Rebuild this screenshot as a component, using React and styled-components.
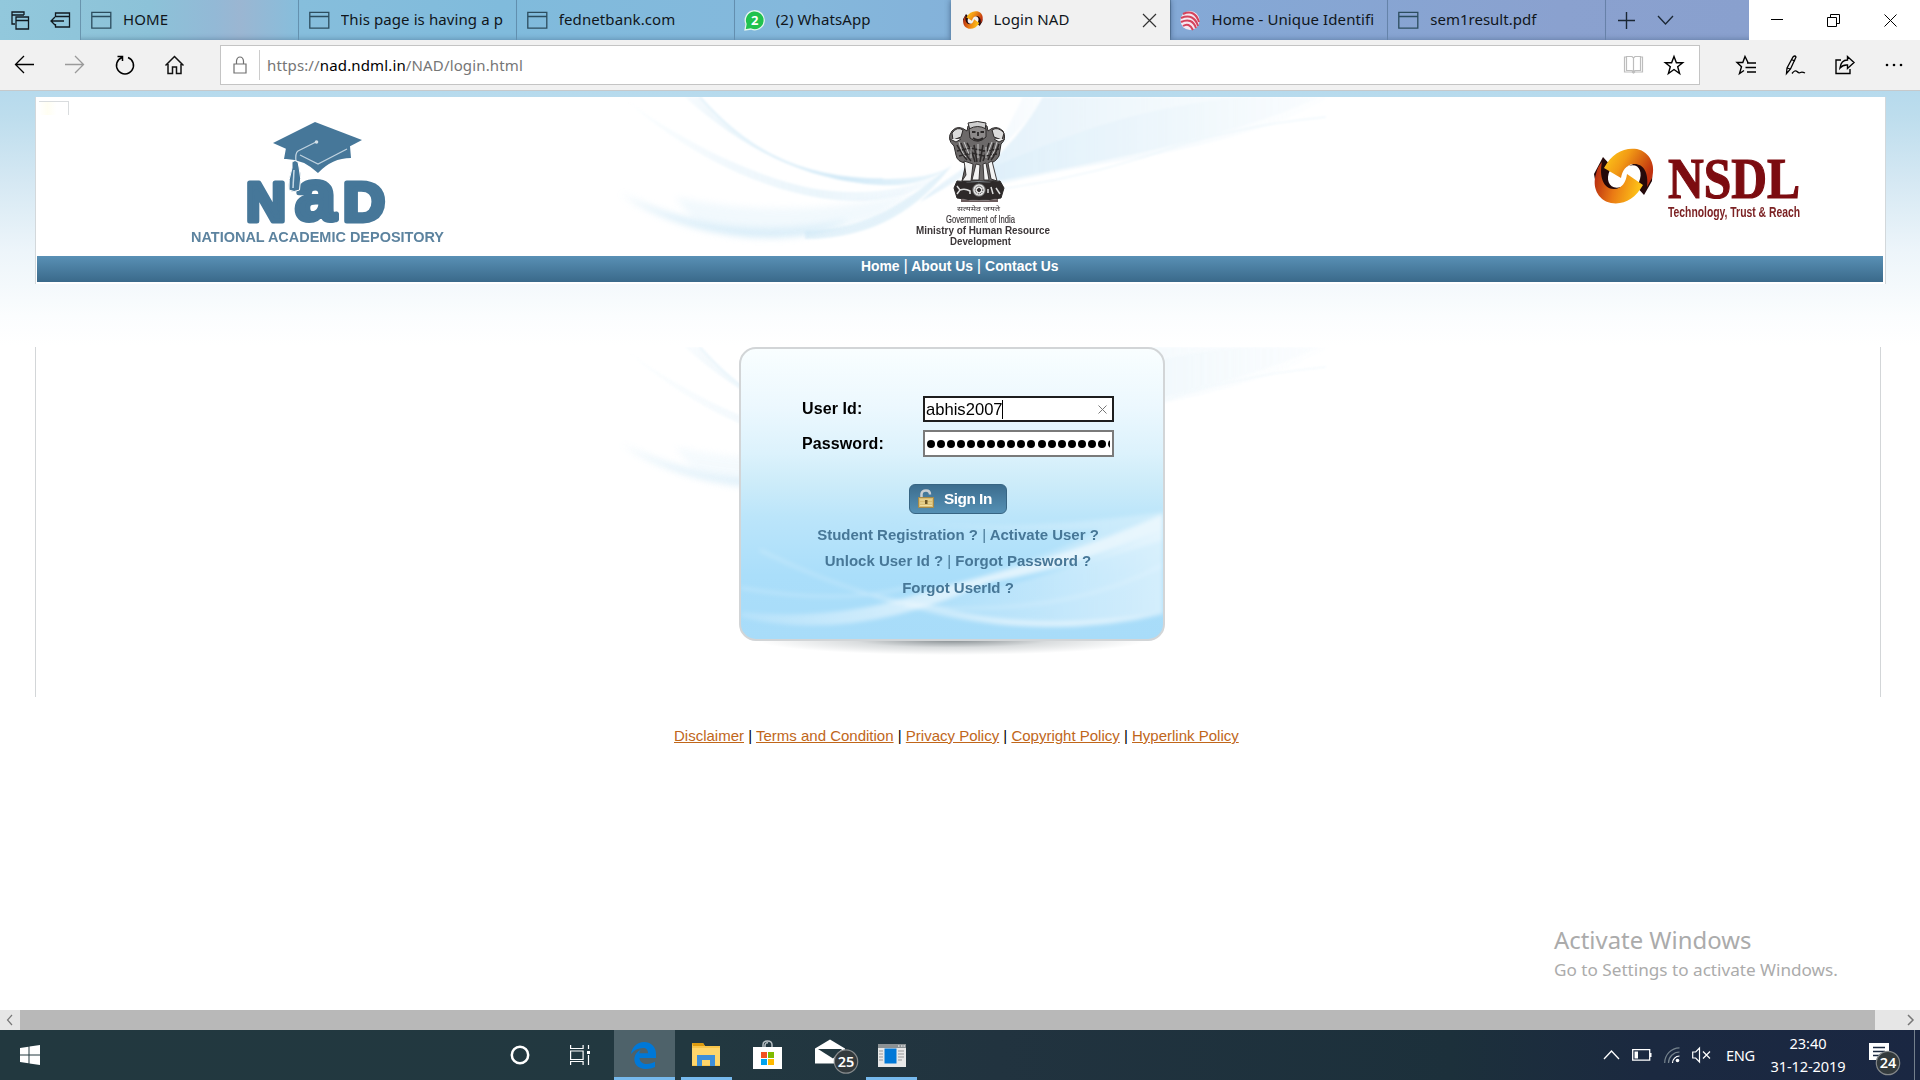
import React from 'react';
import styled, { createGlobalStyle } from 'styled-components';

const ui = '"Noto Sans", "Open Sans", sans-serif';
const arial = '"Liberation Sans", Arial, sans-serif';

const Global = createGlobalStyle`
  * { box-sizing: border-box; }
  body { margin: 0; background: #fff; overflow: hidden; }
  svg { display: block; flex: none; overflow: visible; }
`;

const Screen = styled.div`
  position: relative;
  width: 1920px;
  height: 1080px;
  display: flex;
  flex-direction: column;
  overflow: hidden;
  font-family: ${arial};
  background: #fff;
`;

/* ---------- browser chrome ---------- */
const TabStrip = styled.div`
  display: flex;
  height: 40px;
  flex: none;
  background: linear-gradient(90deg, #92c8dc 0, #8cc2d8 150px, #93b9d6 215px, #9bb6d2 240px, #86bedc 300px, #80bbdc 500px, #84b8dc 800px, #84a9d6 1180px, #8aa1cf 1560px, #89a0ce 1749px);
`;
const Group = styled.div`
  display: flex;
  align-items: center;
  width: ${p => p.$w}px;
  padding-left: ${p => p.$pl || 0}px;
  gap: ${p => p.$gap || 0}px;
`;
const Tab = styled.div`
  display: flex;
  align-items: center;
  width: ${p => p.$w}px;
  padding-left: ${p => p.$pl ?? 10}px;
  gap: ${p => p.$gap || 12}px;
  border-left: 1px solid ${p => (p.$active ? '#f1f1f1' : 'rgba(60,90,120,.45)')};
  box-shadow: inset 0 -6px 5px -5px rgba(40, 70, 100, .35);
  ${p => p.$active && 'background:#f1f1f1; box-shadow: 0 0 6px rgba(30,50,80,.6); clip-path: inset(0 -7px 0 -7px);'}
`;
const TabTitle = styled.span`
  font: 15px/36px ${ui};
  letter-spacing: ${p => p.$ls ?? 0.1}px;
  color: #10161b;
  white-space: nowrap;
  overflow: hidden;
  flex: 1;
  padding-bottom: 2px;
  margin-left: -1px;
`;
const TabClose = styled.svg`
  margin-right: 13px;
`;
const TabEnd = styled.i`
  width: 0;
`;
const WindowButtons = styled.div`
  display: flex;
  align-items: center;
  width: 171px;
  background: #fff;
  padding-left: 22px;
  gap: 44px;
`;
const Toolbar = styled.div`
  display: flex;
  align-items: center;
  height: 51px;
  flex: none;
  background: #f1f1f1;
  border-bottom: 1px solid #c6c9cb;
  padding-left: 14px;
`;
const NavButtons = styled.div`
  display: flex;
  gap: 30px;
  width: 206px;
`;
const AddressBar = styled.div`
  display: flex;
  align-items: center;
  width: 1480px;
  height: 40px;
  border: 1px solid #c4c4c4;
  background: #fff;
  padding-left: 12px;
`;
const Divider = styled.i`
  width: 1px;
  height: 30px;
  margin: 0 7px 0 12px;
  background: #ccc;
`;
const Url = styled.span`
  flex: 1;
  font: 15px/38px ${ui};
  letter-spacing: .14px;
  color: #767676;
  b { font-weight: 400; color: #000; }
`;
const ToolIcons = styled.div`
  display: flex;
  gap: ${p => p.$gap}px;
  padding-left: ${p => p.$pl || 0}px;
  padding-right: ${p => p.$pr || 0}px;
`;

/* ---------- page ---------- */
const Page = styled.main`
  display: flex;
  flex-direction: column;
  height: 919px;
  flex: none;
  padding: 6px 34px 0 35px;
  background: linear-gradient(#b6daed 0, #bddded 25px, #d5e8f3 90px, #edf5fa 160px, #f4f9fc 195px, #fbfdfe 225px, #fff 255px);
`;
const Header = styled.header`
  position: relative;
  height: 187px;
  flex: none;
  background: #fff;
  border: solid #d3d8db;
  border-width: 0 1px;
  padding: 0 2px 2px 1px;
  display: flex;
  flex-direction: column;
`;
const SwirlLayer = styled.svg`
  position: absolute;
  left: 579px;
  top: 0;
  overflow: hidden;
  opacity: ${p => p.$o || 1};
`;
const Logos = styled.div`
  position: relative;
  display: flex;
  height: 159px;
  flex: none;
`;
const Broken = styled.i`
  width: 30px;
  height: 14px;
  margin: 4px 0 0 2px;
  border: solid #d9dcde;
  border-width: 1px 1px 0 0;
  background: linear-gradient(90deg, #fff, #fffef2 30%, #fff 60%);
`;
const NavBar = styled.nav`
  position: relative;
  height: 26px;
  flex: none;
  padding-left: 824px;
  font: bold 13.9px/20px ${arial};
  color: #fff;
  white-space: pre;
  background: linear-gradient(#5990b5, #3a698a);
  i { font-style: normal; font-weight: 400; font-size: 17px; line-height: 16px; }
`;
const Content = styled.section`
  position: relative;
  height: 350px;
  flex: none;
  margin: 63px 5px 0 0;
  border: solid #d3d6d8;
  border-width: 0 1px;
  padding-left: 703px;
`;
const Card = styled.form`
  position: relative;
  width: 426px;
  height: 294px;
  border: 2px solid #d2d5d7;
  border-radius: 17px;
  overflow: hidden;
  background: linear-gradient(#f9feff 0, #ecf8fe 20%, #dcf2fc 36%, #cdecf9 46%, #bbe5fa 58%, #aadefa 78%, #a8dcf9 100%);
`;
const CardArt = styled.svg`
  position: absolute;
  inset: 0;
`;
const CardShadow = styled.div`
  width: 390px;
  height: 15px;
  margin: -1px 0 0 18px;
  background: radial-gradient(ellipse 50% 100% at 50% 0, rgba(90, 100, 105, .75), rgba(130, 140, 145, .3) 50%, transparent);
`;
const Fields = styled.div`
  position: relative;
  padding: 47px 0 0 61px;
  display: grid;
  grid-template-columns: 121px 191px;
  grid-template-rows: 26px 27px;
  row-gap: 8px;
  align-items: center;
`;
const Label = styled.label`
  font: bold 16px/20px ${arial};
  letter-spacing: .1px;
  color: #000;
`;
const Field = styled.div`
  height: 100%;
  display: flex;
  align-items: center;
  border: 2px solid ${p => (p.$focus ? '#1e1e1e' : '#7a7a7a')};
  background: #fff;
  font: 16.6px/20px ${arial};
  padding: ${p => (p.$focus ? '1px 5px 0 1px' : '0 2px 0 1px')};
`;
const Caret = styled.i`
  width: 1px;
  height: 19px;
  background: #000;
  margin: 0 auto 1px -1px;
`;
const Dots = styled.div`
  display: flex;
  gap: 2.1px;
  padding-left: .5px;
  width: 184px;
  overflow: hidden;
`;
const Dot = styled.i`
  flex: none;
  width: 8px;
  height: 8px;
  border-radius: 50%;
  background: #000;
`;
const SignIn = styled.div`
  position: relative;
  display: flex;
  align-items: center;
  width: 98px;
  height: 30px;
  margin: 27px 0 0 168px;
  padding-left: 8px;
  gap: 10px;
  border-radius: 6px;
  border: 1px solid #376583;
  background: linear-gradient(#3c6d8e, #5590b4);
  color: #fff;
  font: bold 15.4px/30px ${arial};
  letter-spacing: -.5px;
  white-space: nowrap;
`;
const Links = styled.div`
  position: relative;
  padding: 8px 0 0 12px;
  text-align: center;
  font: bold 15px/26.3px ${arial};
  color: #477797;
  white-space: pre;
  i { font-style: normal; font-weight: 400; }
`;
const Footer = styled.footer`
  padding: 30px 0 0 639px;
  font: 15px/18px ${arial};
  white-space: pre;
  a { color: #c0661a; text-decoration: underline; }
`;
const Watermark = styled.div`
  position: absolute;
  left: 1554px;
  top: 922px;
  color: #ababab;
  font: 17.15px/25px ${ui};
  white-space: nowrap;
  div { font-size: 23.9px; line-height: 35px; }
`;
const ScrollBar = styled.div`
  display: flex;
  align-items: center;
  height: 20px;
  flex: none;
  background: #e6e6e6;
  padding: 0 5px 0 6px;
`;
const Thumb = styled.div`
  width: 1855px;
  height: 20px;
  margin: 0 auto 0 6px;
  background: #b8b8b8;
`;

/* ---------- taskbar ---------- */
const Taskbar = styled.div`
  display: flex;
  height: 50px;
  flex: none;
  background: linear-gradient(90deg, #22383f 0, #223840 700px, #21333f 1000px, #1c303b 1450px, #1b2940 1650px, #1a2742 1920px);
`;
const Task = styled.div`
  display: flex;
  align-items: center;
  justify-content: center;
  width: ${p => p.$w}px;
  margin-left: ${p => p.$ml || 0}px;
  padding-right: ${p => p.$pr || 0}px;
  background: ${p => (p.$active ? '#4e626a' : 'transparent')};
  border-bottom: 3px solid ${p => (p.$open ? '#76b9ed' : 'transparent')};
  border-top: 3px solid transparent;
`;
const Tray = styled.div`
  display: flex;
  align-items: center;
  margin-left: auto;
  padding-right: 5px;
  color: #fff;
  font: 14.6px/23px ${ui};
`;
const TrayIcon = styled.svg`
  margin-left: ${p => p.$ml || 0}px;
`;
const Lang = styled.span`
  width: 30px;
  margin-left: 14px;
  letter-spacing: -.4px;
`;
const Clock = styled.div`
  width: 80px;
  margin-left: 12px;
  text-align: center;
  letter-spacing: -.1px;
  white-space: nowrap;
`;
const ShowDesktop = styled.i`
  width: 1px;
  height: 50px;
  margin-left: 12px;
  background: #74808c;
`;

const PageIcon = () => (
  <svg width="21" height="17" fill="none" stroke="#2c4d5e" strokeWidth="1.3">
    <path d="M.8.3h19v15.900H.8zM.8 4.500h19" />
  </svg>
);
const NsdlMark = ({ s = 60, h = 56 }) => (
  <svg width={s} height={h} viewBox="0 0 60 56" preserveAspectRatio="none">
    <defs>
      <linearGradient id="oa" x1="0" y1="0" x2="1" y2=".5"><stop offset="0" stopColor="#ffd21a" /><stop offset=".45" stopColor="#f29a15" /><stop offset="1" stopColor="#c0310f" /></linearGradient>
      <linearGradient id="ob" x1="1" y1=".5" x2="0" y2=".3"><stop offset="0" stopColor="#ffc817" /><stop offset=".55" stopColor="#ea7a14" /><stop offset="1" stopColor="#b62b10" /></linearGradient>
    </defs>
    <path d="M9 9 0 26Q2 43 15 46L31 37C18 45 10 34 16 22L20 21Z" fill="#25090a" />
    <path d="M50 47 58 33Q60 17 46 13L30 20C43 12 50 22 45 34L41 37Z" fill="#25090a" />
    <path d="M10 20C18 5 30-1 43 1 56 4 62 17 58 30L53 39C55 24 49 15 39 16 32 17 28 23 27 30Z" fill="url(#oa)" />
    <path d="M49 37C41 51 30 57 17 55 3 52-2 38 2 26 3 21 5 17 8 14 5 28 9 41 20 41 28 41 32 34 33 26Z" fill="url(#ob)" />
  </svg>
);

const Swirl = ({ id }) => (
  <>
    <defs>
      <linearGradient id={id + 'a'} x1="0" x2="1"><stop offset="0" stopColor="#c8e5f5" stopOpacity=".15" /><stop offset=".35" stopColor="#bfe1f4" stopOpacity=".5" /><stop offset=".6" stopColor="#b5dcf2" stopOpacity=".6" /><stop offset="1" stopColor="#c5e4f6" stopOpacity=".35" /></linearGradient>
      <linearGradient id={id + 'b'} x1="0" x2="1"><stop offset="0" stopColor="#d6ebf8" stopOpacity=".75" /><stop offset="1" stopColor="#e8f4fb" stopOpacity=".15" /></linearGradient>
      <filter id={id + 'f'}><feGaussianBlur stdDeviation="1.1" /></filter>
      <filter id={id + 'g'} x="-20%" y="-40%" width="140%" height="180%"><feGaussianBlur stdDeviation="3.5" /></filter>
    </defs>
    <g filter={`url(#${id}f)`}>
      <path d="M85 0C125 45 175 82 268 82 300 82 322 78 337 69 320 82 295 90 265 88 190 84 125 50 70 0Z" fill={`url(#${id}a)`} />
      <path d="M85 0C125 45 175 82 268 82" stroke="#cfe8f6" strokeWidth="1.500" fill="none" opacity=".6" />
      <path d="M13 5C70 45 135 78 195 91 240 99 285 96 330 76 295 104 250 108 205 101 130 88 65 50 13 5Z" fill={`url(#${id}a)`} opacity=".45" />
      <path d="M430 0C405 35 380 58 350 78 335 88 320 97 305 105 330 80 360 68 390 36L408 0Z" fill={`url(#${id}b)`} />
      <path d="M428 0H705Q640 30 530 55 430 76 340 92 395 58 428 0Z" fill={`url(#${id}b)`} />
      <path d="M340 88Q400 58 480 30 560 5 630 0H715Q660 35 530 60 430 75 345 97Z" fill={`url(#${id}b)`} opacity=".6" />
      <path d="M350 96Q440 88 530 60 610 30 711 20" stroke="#e4f2fa" fill="none" opacity=".8" />
      <path d="M190 134C255 132 290 105 337 68 305 110 260 142 190 142Z" fill="#c3e3f5" opacity=".45" />
    </g>
    <path d="M5 96C65 128 150 140 235 122 190 152 80 148 5 96Z" fill="#bfe1f4" opacity=".6" filter={`url(#${id}g)`} />
    <path d="M60 100Q180 125 300 95L260 122Q180 145 80 125Z" fill="#e2f2fb" filter={`url(#${id}g)`} opacity=".45" />
  </>
);

const NadLogo = () => (
  <svg width="270" height="130" viewBox="186 118 270 130" fill="#467799" fontFamily="Liberation Sans, sans-serif">
    <path d="M286 148 284 159Q302 158 318 173 332 158 351 158L350 146Z" />
    <path d="M273 143 315 122 362 140 318 163Z" />
    <path d="M300 155 318 164 347 149M316 142 298 151Q295 153 296 162" fill="none" stroke="#bfd2df" strokeWidth="1.3" />
    <circle cx="316.500" cy="142" r="1.800" fill="#d5e1e9" />
    <g stroke="#467799" strokeWidth="5" strokeLinejoin="round" fontWeight="bold">
      <text x="246" y="220.500" fontSize="55" textLength="40" lengthAdjust="spacingAndGlyphs">N</text>
      <text x="295" y="220" fontSize="72" textLength="41" lengthAdjust="spacingAndGlyphs">a</text>
      <text x="343" y="220.500" fontSize="55" textLength="42" lengthAdjust="spacingAndGlyphs">D</text>
    </g>
    <path d="M292 162Q295 159 298 162L299 167Q302 178 299.500 190 294 193 289 190 288 180 292 168Z" stroke="#fff" strokeWidth="1" />
    <path d="M294 170 293 188" stroke="#c7dbe8" strokeWidth="1.500" />
    <text x="191" y="242" fontSize="15.300" fontWeight="bold" fill="#5c839f" textLength="253" lengthAdjust="spacingAndGlyphs">NATIONAL ACADEMIC DEPOSITORY</text>
  </svg>
);

const Emblem = () => (
  <svg width="140" height="132" viewBox="914 118 140 132" fontFamily="Liberation Sans, sans-serif" fill="#3b3638">
    <g stroke="#2b2828" strokeWidth="1">
      <path d="M968 126Q977 121 987 126L988 131Q996 124 1003 131 1007 139 1001 144L999 156Q995 163 989 163L996 181H962L966 163Q957 162 956 155L954 146Q946 139 952 131 958 124 967 131Z" fill="#6c6969" />
      <path d="M968 123Q978 120 986 123L985 130H970Z" fill="#cfcfcf" />
      <path d="M952 133Q957 126 963 130L961 137 953 140ZM1004 133Q998 126 992 130L994 137 1002 140Z" fill="#dcdcdc" />
      <path d="M950 139 956 142 961 139M1005 139 999 142 994 139" fill="#eee" />
      <path d="M969 129Q978 124 986 129L986 137Q978 145 970 138Z" fill="#8d8a8a" />
      <path d="M972 132H975.500M980.500 132H984M978 132V136M973 138Q978 142 983 138" fill="none" strokeWidth="1.800" />
      <path d="M957 145Q963 156 967 160M961 143Q966 156 971 161M967 143Q973 153 975 162M974 145 977 162M983 145 980 162M989 143Q985 156 983 161M994 143Q990 156 988 160M999 144Q995 156 991 160M957 151 970 148 985 151 999 149M959 156 972 153 984 156 997 154" fill="none" strokeWidth="1.500" />
      <path d="M959 142Q961 152 966 157M964 142 969 154M992 142 987 155M997 142Q995 152 991 157M971 147V158M986 147V158M978 144V158" fill="none" stroke="#d2d2d2" strokeWidth=".9" />
      <path d="M964 161 966 175 962 181H971L973 164ZM976 164 972 180H979L980 165ZM983 164 984 180H989L986 163ZM988 163 991 179 997 181 992 161Z" fill="#f3f3f3" strokeWidth=".9" />
      <path d="M957 181Q978 184 1000 181L1004 188 1001 198Q979 202 957 198L954 188Z" fill="#2d2929" />
      <circle cx="979" cy="190" r="6.300" fill="#e3e3e3" stroke="#555" /><circle cx="979" cy="190" r="3.800" fill="none" strokeDasharray="1 1" /><circle cx="979" cy="190" r="1.500" />
      <path d="M957 186 960 190 957 194M960 190Q965 188 970 191V194M988 193V189M991 187 993 194M996 188 1000 194" stroke="#ddd" fill="none" strokeWidth="1.500" />
    </g>
    <path d="M961 199Q979 202 998 199V202H961Z" fill="#6a5b5c" />
    <text x="957" y="210.500" fontSize="7" fontFamily="Noto Sans Devanagari, Noto Sans, sans-serif" textLength="43" lengthAdjust="spacingAndGlyphs">सत्यमेव जयते</text>
    <text x="946" y="222.500" fontSize="11" textLength="69" lengthAdjust="spacingAndGlyphs" stroke="#3b3638" strokeWidth=".2">Government of India</text>
    <text x="916" y="234" fontSize="11" fontWeight="bold" textLength="134" lengthAdjust="spacingAndGlyphs">Ministry of Human Resource</text>
    <text x="950" y="245" fontSize="10.500" fontWeight="bold" textLength="61" lengthAdjust="spacingAndGlyphs">Development</text>
  </svg>
);

const Nsdl = () => (
  <svg width="212" height="80" viewBox="1592 145 212 80">
    <svg x="1594" y="148" width="60" height="56"><NsdlMark /></svg>
    <text x="1668" y="197.500" fontFamily="Liberation Serif, serif" fontWeight="bold" fontSize="56" fill="#7c0c10" stroke="#7c0c10" strokeWidth="1.200" textLength="132" lengthAdjust="spacingAndGlyphs">NSDL</text>
    <text x="1668" y="217" fontFamily="Liberation Sans, sans-serif" fontWeight="bold" fontSize="14" fill="#7c2224" textLength="132" lengthAdjust="spacingAndGlyphs">Technology, Trust &amp; Reach</text>
  </svg>
);

const LogoSlot = styled.div`
  margin: ${p => p.$top}px 0 0 ${p => p.$left}px;
`;

const Badge = ({ x, y, n }) => (
  <g>
    <circle cx={x} cy={y} r="11.700" fill="#333a3d" stroke="#85898b" strokeWidth="1.200" />
    <text x={x} y={y + 5.200} textAnchor="middle" fontFamily="Noto Sans, sans-serif" fontWeight="600" fontSize="14.500" fill="#fff">{n}</text>
  </g>
);

export default function App() {
  return (
    <Screen>
      <Global />
      <TabStrip>
        <Group $w={80} $pl={11} $gap={20}>
          <svg width="19" height="19" fill="none" stroke="#101a20" strokeWidth="1.300"><path d="M4 13H1V1h12v3M1 4h12M5 6h12.500v12H5zM5 9.500h12.500" /></svg>
          <svg width="20" height="17" fill="none" stroke="#101a20" strokeWidth="1.300"><path d="M5.500 5V1h14v14h-14v-3M5.500 4.500h14M14 9H1M5 5 1 9l4 4" /></svg>
        </Group>
        <Tab $w={218}><PageIcon /><TabTitle>HOME</TabTitle></Tab>
        <Tab $w={218}><PageIcon /><TabTitle>This page is having a p</TabTitle></Tab>
        <Tab $w={218}><PageIcon /><TabTitle>fednetbank.com</TabTitle></Tab>
        <Tab $w={217} $pl={9} $gap={12}>
          <svg width="21" height="21"><path d="M1 20 2 14A9.500 9.500 0 1 1 7 19Z" fill="#20c24e" stroke="#e5f6ee" strokeWidth="1.300" /><text x="10.800" y="15" textAnchor="middle" fontFamily="Noto Sans, sans-serif" fontWeight="bold" fontSize="13" fill="#fff">2</text></svg>
          <TabTitle>(2) WhatsApp</TabTitle>
        </Tab>
        <Tab $w={220} $active $pl={11} $gap={12}>
          <NsdlMark s={20} h={18} />
          <TabTitle>Login NAD</TabTitle>
          <TabClose width="15" height="15" stroke="#333" strokeWidth="1.200"><path d="M1 1 14 14M14 1 1 14" /></TabClose>
        </Tab>
        <Tab $w={217} $pl={9} $gap={11}>
          <svg width="21" height="21" fill="none" stroke="#d4435c" strokeWidth="2">
            <circle cx="10" cy="10.500" r="9.500" fill="#f5e8f0" stroke="none" />
            <path d="M3 4Q15-1 19 12M1 8Q14 3 18 16M1 12Q12 7 16 18M3 16Q9 12 13 20" />
          </svg>
          <TabTitle>Home - Unique Identifi</TabTitle>
          <TabEnd />
        </Tab>
        <Tab $w={218} $pl={10}><PageIcon /><TabTitle $ls={0}>sem1result.pdf</TabTitle></Tab>
        <Tab $w={144} $pl={12} $gap={22}>
          <svg width="17" height="17" stroke="#1b2734" strokeWidth="1.400"><path d="M0 8.500h17M8.500 0v17" /></svg>
          <svg width="17" height="10" stroke="#1b2734" fill="none" strokeWidth="1.300"><path d="m1 1 7.500 8L16 1" /></svg>
        </Tab>
        <WindowButtons>
          <svg width="12" height="12" stroke="#000"><path d="M0 5.500h12" /></svg>
          <svg width="13" height="13" stroke="#000" fill="none"><path d="M.5 3.500h9v9h-9zM3.500 3.500v-3h9v9h-3" /></svg>
          <svg width="13" height="13" stroke="#000"><path d="M.5.5l12 12M12.500.5l-12 12" /></svg>
        </WindowButtons>
      </TabStrip>
      <Toolbar>
        <NavButtons>
          <svg width="20" height="20" stroke="#000" fill="none" strokeWidth="1.300"><path d="M20 9.500H2M10 1 1.500 9.500l8.500 8.500" /></svg>
          <svg width="21" height="20" stroke="#9a9a9a" fill="none" strokeWidth="1.300"><path d="M1 9.500h18M11 1 19.500 9.500 11 18" /></svg>
          <svg width="20" height="20" stroke="#000" fill="none" strokeWidth="1.500"><path d="M7 2.500A8.500 8.500 0 1 0 13 2.500M2.500 1.500h5V6" /></svg>
          <svg width="21" height="20" stroke="#111" fill="none" strokeWidth="1.500"><path d="M.5 10.500 9.500 1.500 18.500 10.500M3 9v9.500h4.500V12h4v6.500H16V9" /></svg>
        </NavButtons>
        <AddressBar>
          <svg width="14" height="19" stroke="#707070" fill="none" strokeWidth="1.200"><path d="M1 8h12v9H1zM3.500 8V5Q4 1 7 1t3.500 4V8" /></svg>
          <Divider />
          <Url>https://<b>nad.ndml.in</b>/NAD/login.html</Url>
          <ToolIcons $gap={20} $pr={15}>
            <svg width="20" height="18" stroke="#bdbdbd" fill="none" strokeWidth="1.200"><path d="M2.500 2H.5v15H8l1.500 1 1.500-1h7.500V2h-2M2.500 1.500H8L9.500 3 11 1.500h5.500v14H11L9.500 17 8 15.500H2.500zM9.500 3v14" /></svg>
            <svg width="20" height="20" stroke="#000" fill="none" strokeWidth="1.400"><path d="m10 1.500 2.400 6.200h6.300l-5 4.100 1.900 6.700L10 14.500l-5.600 4 1.900-6.700-5-4.100h6.300z" /></svg>
          </ToolIcons>
        </AddressBar>
        <ToolIcons $gap={29} $pl={36}>
          <svg width="20" height="20" stroke="#000" fill="none" strokeWidth="1.400"><path d="M12 7.500 9 1.500 6.800 7.500H1l4.500 4.300-2 6.700L8 15.500M11 8h9M9.500 12.500H20M11 17h9" /></svg>
          <svg width="21" height="20" stroke="#000" fill="none" strokeWidth="1.300"><path d="M2 13 8 2q2-2 3 0L5.500 14 1.500 18.500zM2 13l3.500 1M6.500 4.500l3.500 1.700M7 18.500q3-4 5-2t3.500 1 4.500.5" /></svg>
          <svg width="20" height="20" stroke="#000" fill="none" strokeWidth="1.400"><path d="M6 5H1v13.500h14V14M5 13Q6 5 12.500 5V1.500L19 7.500l-6.500 6V10Q8 9.500 5 13Z" /></svg>
          <svg width="20" height="20" fill="#000"><circle cx="3" cy="10" r="1.300" /><circle cx="10" cy="10" r="1.300" /><circle cx="17" cy="10" r="1.300" /></svg>
        </ToolIcons>
      </Toolbar>

      <Page>
        <Header>
          <SwirlLayer width="720" height="159"><Swirl id="s" /></SwirlLayer>
          <Logos>
            <Broken />
            <LogoSlot $top={21} $left={117}><NadLogo /></LogoSlot>
            <LogoSlot $top={21} $left={458}><Emblem /></LogoSlot>
            <LogoSlot $top={48} $left={538}><Nsdl /></LogoSlot>
          </Logos>
          <NavBar>Home <i>|</i> About Us <i>|</i> Contact Us</NavBar>
        </Header>
        <Content>
          <SwirlLayer $o={0.75} width="720" height="159"><Swirl id="t" /></SwirlLayer>
          <Card>
            <CardArt width="422" height="290" viewBox="741 349 422 290">
              <defs>
                <linearGradient id="w" x1="0" x2="1"><stop offset="0" stopColor="#fff" stopOpacity=".15" /><stop offset=".5" stopColor="#fff" stopOpacity=".6" /><stop offset="1" stopColor="#fff" stopOpacity=".55" /></linearGradient>
                <linearGradient id="v" x1="0" x2="1"><stop offset="0" stopColor="#fff" stopOpacity="0" /><stop offset="1" stopColor="#fff" stopOpacity=".5" /></linearGradient>
                <filter id="cf"><feGaussianBlur stdDeviation="2" /></filter>
              </defs>
              <g filter="url(#cf)">
                <path d="M820 510Q960 540 1163 512V540Q1040 580 930 590 1040 560 1100 530 960 535 820 510Z" fill="url(#v)" opacity=".6" />
                <path d="M741 612Q840 622 930 590 1060 560 1163 514V530Q1080 565 990 582 850 645 741 617Z" fill="url(#w)" />
                <path d="M902 604Q1030 590 1163 530V614Q1040 645 902 604Z" fill="url(#v)" />
                <path d="M850 590Q880 600 905 606 1030 643 1163 613 1030 632 940 607 880 595 850 590Z" fill="url(#w)" opacity=".8" />
                <path d="M741 588Q840 605 905 588M760 550Q830 585 900 603M905 605Q1060 620 1163 565" fill="none" stroke="#fff" strokeOpacity=".22" strokeWidth="3" />
              </g>
            </CardArt>
            <Fields>
              <Label>User Id:</Label>
              <Field $focus>abhis2007<Caret /><svg width="9" height="9" stroke="#777"><path d="m.5.5 8 8m0-8-8 8" /></svg></Field>
              <Label>Password:</Label>
              <Field><Dots>{Array.from({ length: 19 }, (_, i) => <Dot key={i} />)}</Dots></Field>
            </Fields>
            <SignIn>
              <svg width="16" height="20"><path d="M3.500 9V5Q4 1.500 8 1.500t4 4" fill="none" stroke="#c9ced2" strokeWidth="2.500" /><path d="M.5 8.500h15v10H.5z" fill="#d9bd73" stroke="#a68a4a" /><path d="M2 11h12M2 14h12M2 16.500h12" stroke="#f0dfa4" /><path d="M7 11h2.500v4H7z" fill="#6b5626" /></svg>
              Sign In
            </SignIn>
            <Links>
              <div>Student Registration ? <i>|</i> Activate User ?</div>
              <div>Unlock User Id ? <i>|</i> Forgot Password ?</div>
              <div>Forgot UserId ?</div>
            </Links>
          </Card>
          <CardShadow />
        </Content>
        <Footer><a>Disclaimer</a> | <a>Terms and Condition</a> | <a>Privacy Policy</a> | <a>Copyright Policy</a> | <a>Hyperlink Policy</a></Footer>
      </Page>
      <ScrollBar>
        <svg width="8" height="12" stroke="#777" fill="none" strokeWidth="1.200"><path d="M6 1 1.500 6 6 11" /></svg>
        <Thumb />
        <svg width="9" height="12" stroke="#777" fill="none" strokeWidth="1.500"><path d="m2 1 5 5-5 5" /></svg>
      </ScrollBar>
      <Taskbar>
        <Task $w={60}><svg width="20" height="20" fill="#fff"><path d="m0 3 8.500-1.200v7.700H0zM9.500 1.600 20 0v9.500H9.500zM0 10.500h8.500v7.700L0 17zM9.500 10.500H20V20L9.500 18.400z" /></svg></Task>
        <Task $w={60} $ml={430}><svg width="20" height="20" fill="none" stroke="#fff" strokeWidth="2.500"><circle cx="10" cy="10" r="8.200" /></svg></Task>
        <Task $w={60}><svg width="20" height="20" fill="none" stroke="#fff" strokeWidth="1.200"><path d="M.6 0v3.500h12.500V0M.6 6h12.500v8.500H.6zM.6 20v-3.500h12.500V20M18.500 0v4M18.500 10v10" /><path d="M17 6h3v3h-3z" fill="#fff" stroke="none" /></svg></Task>
        <Task $w={61} $ml={4} $pr={2} $active $open>
          <svg width="26" height="27" viewBox="0 0 26 27"><path d="M0 12C1 5 6 0 13 0c8 0 12 6 12 12v4H8.500c.3 4 3.500 6 7.500 6 3 0 6-1 8-2.200v5.200c-2.500 1.300-5.500 2-9 2C7 27 2.500 22 3.500 15.500 4 12 6.500 9.500 9.500 8 8.800 9 8.400 10.200 8.300 11.200H17C17 8 15.500 6 12 6 7 6 3 8 0 12Z" fill="#0078d7" /></svg>
        </Task>
        <Task $w={51} $ml={6} $pr={1} $open>
          <svg width="28" height="24"><path d="M0 0h11l2 3h15v20H0z" fill="#f9c64a" /><path d="M0 0h11l2 3H1z" fill="#dd9c10" /><path d="M0 5h28v17H0z" fill="#ffd66b" /><path d="M5 23V12h18v11h-5v-6h-8v6z" fill="#3e8fd9" /></svg>
        </Task>
        <Task $w={60} $ml={5}>
          <svg width="29" height="30"><path d="M10 8V5q0-4 4.500-4T19 5v3M12 8V5q1-3 3-2" stroke="#b8c0c4" strokeWidth="1.500" fill="none" /><path d="M0 7h29v22H0z" fill="#fff" /><path d="M8 12h6v6H8z" fill="#f25022" /><path d="M15 12h6v6h-6z" fill="#7fba00" /><path d="M8 19h6v6H8z" fill="#00a4ef" /><path d="M15 19h6v6h-6z" fill="#ffb900" /></svg>
        </Task>
        <Task $w={60} $ml={10}>
          <svg width="44" height="35" viewBox="0 0 44 35"><path d="M0 10.500 15 1.500l15 9v15H0z" fill="#fff" /><path d="m3 11 15 9.500 9-9.500z" fill="#22373f" /><Badge x={31} y={23.500} n="25" /></svg>
        </Task>
        <Task $w={51} $ml={-1} $open>
          <svg width="28" height="23"><path d="M0 0h28v23H0z" fill="#e8e8e8" /><path d="M0 0h28v4H0z" fill="#8b9194" /><path d="M20 2h1.500m1.500 0h1.500m1 0h1.500" stroke="#fff" /><path d="M1 7h4M1 10h4M1 13h4M1 16h4M20 7h6M20 10h6M20 13h6M20 16h4" stroke="#999" /><path d="M6.500 4.500h12v15h-12z" fill="#0078d7" /></svg>
        </Task>
        <Tray>
          <svg width="17" height="10" fill="none" stroke="#fff" strokeWidth="1.300"><path d="M1 9 8.500 1 16 9" /></svg>
          <TrayIcon $ml={12} width="20" height="12" fill="none" stroke="#fff" strokeWidth="1.300"><path d="M.7.7h17v10.500h-17z" /><path d="M2.500 2.500h3.500v7H2.500zM18 4h1.500v4H18z" fill="#fff" stroke="none" /></TrayIcon>
          <TrayIcon $ml={12} width="16" height="16" fill="none" stroke="#76838d" strokeWidth="1.200"><path d="M.7 16A15 15 0 0 1 15.500.8M4.500 16A11 11 0 0 1 15.500 5" /><path d="M8.500 16a7 7 0 0 1 7-7" stroke="#fff" /><circle cx="13.500" cy="13.500" r="1.800" fill="#fff" stroke="none" /></TrayIcon>
          <TrayIcon $ml={12} width="20" height="16" fill="none" stroke="#fff" strokeWidth="1.200"><path d="M.7 5h3L7.500 1v14l-3.800-4h-3zM11 4.500l7 7M18 4.500l-7 7" /></TrayIcon>
          <Lang>ENG</Lang>
          <Clock>23:40<br />31-12-2019</Clock>
          <TrayIcon $ml={20} width="34" height="34" viewBox="0 0 34 34"><path d="M1 5h20v17H1z" fill="#fff" /><path d="M5 9.500h12M5 13.500h12M5 17.500h8" stroke="#1b2940" strokeWidth="1.300" /><Badge x={20} y={25} n="24" /></TrayIcon>
          <ShowDesktop />
        </Tray>
      </Taskbar>
      <Watermark><div>Activate Windows</div>Go to Settings to activate Windows.</Watermark>
    </Screen>
  );
}
